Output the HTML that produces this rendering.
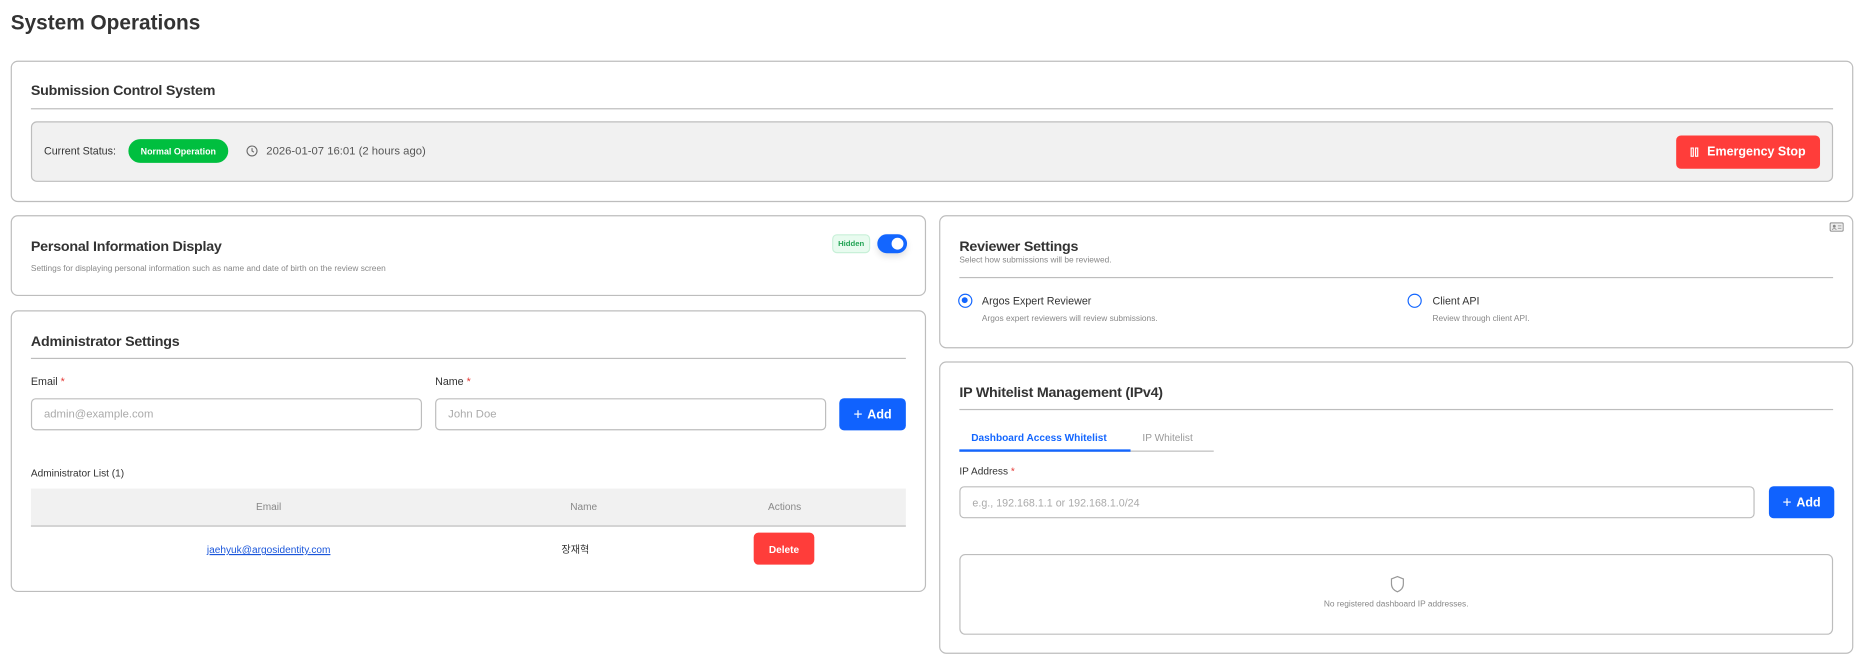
<!DOCTYPE html>
<html><head><meta charset="utf-8"><style>
html,body{margin:0;padding:0;background:#fff;width:1864px;height:667px;overflow:hidden}
#w{position:absolute;left:0;top:0;width:1568px;height:561px;transform:scale(1.18878);transform-origin:0 0;font-family:"Liberation Sans","Noto Sans CJK KR",sans-serif;color:#333}
.a{position:absolute}
.card{position:absolute;border:1px solid #bdbdbd;border-radius:6px;background:#fff;box-sizing:border-box}
.h{position:absolute;font-size:12px;font-weight:bold;color:#333;letter-spacing:-0.2px}
.hr{position:absolute;height:1px;background:#bdbdbd}
.t{position:absolute;white-space:nowrap}
.inp{position:absolute;border:1px solid #bdbdbd;border-radius:4px;box-sizing:border-box;font-size:9.5px;color:#aaa;padding-left:10px;display:flex;align-items:center}
.btn{position:absolute;border-radius:4px;color:#fff;font-weight:bold;display:flex;align-items:center;justify-content:center;white-space:nowrap}
.lbl{font-size:9px;color:#333}
.req{color:#e53935}
.s{font-size:7.5px;color:#888}
</style></head><body><div id="w">
<div class="t" style="left:9px;top:9px;font-size:17.5px;font-weight:bold;color:#333">System Operations</div>

<div class="card" style="left:9px;top:51px;width:1550px;height:119px"></div>
<div class="h" style="left:26px;top:69px">Submission Control System</div>
<div class="hr" style="left:26px;top:91px;width:1516px"></div>
<div class="a" style="left:26px;top:102px;width:1516px;height:51px;background:#f1f1f1;border:1px solid #bdbdbd;border-radius:5px;box-sizing:border-box"></div>
<div class="t" style="left:37px;top:122px;font-size:9px;color:#333">Current Status:</div>
<div class="btn" style="left:108px;top:117px;width:84px;height:20px;border-radius:10px;background:#00bf3f;font-size:7.5px">Normal Operation</div>
<svg class="a" style="left:207px;top:122px" width="10" height="10" viewBox="0 0 10 10"><circle cx="5" cy="5" r="4.2" fill="none" stroke="#666" stroke-width="0.9"/><path d="M5 2.6V5l1.6 1" fill="none" stroke="#666" stroke-width="0.9"/></svg>
<div class="t" style="left:224px;top:122px;font-size:9.5px;color:#555">2026-01-07 16:01 (2 hours ago)</div>
<div class="btn" style="left:1410px;top:114px;width:121px;height:28px;background:#ff3d3a;font-size:10.5px"><svg width="7" height="8" viewBox="0 0 7 8" style="margin-right:7px"><rect x="0.6" y="0.5" width="1.8" height="7" fill="none" stroke="#fff" stroke-width="1"/><rect x="4.3" y="0.5" width="1.8" height="7" fill="none" stroke="#fff" stroke-width="1"/></svg>Emergency Stop</div>

<div class="card" style="left:9px;top:181px;width:770px;height:68px"></div>
<div class="h" style="left:26px;top:200px">Personal Information Display</div>
<div class="t s" style="left:26px;top:223px;font-size:7px">Settings for displaying personal information such as name and date of birth on the review screen</div>
<div class="btn" style="left:700px;top:197px;width:32px;height:16px;background:#e8fbef;border:1px solid #c8f0d8;box-sizing:border-box;color:#23a455;font-size:6.5px">Hidden</div>
<div class="a" style="left:738px;top:197px;width:25px;height:16px;border-radius:8px;background:#1366ff;box-shadow:0 3px 6px rgba(0,0,0,.12)"><div class="a" style="right:3px;top:3px;width:10px;height:10px;border-radius:5px;background:#fff"></div></div>

<div class="card" style="left:9px;top:261px;width:770px;height:237px"></div>
<div class="h" style="left:26px;top:280px">Administrator Settings</div>
<div class="hr" style="left:26px;top:301px;width:736px"></div>
<div class="t lbl" style="left:26px;top:316px">Email <span class="req">*</span></div>
<div class="t lbl" style="left:366px;top:316px">Name <span class="req">*</span></div>
<div class="inp" style="left:26px;top:335px;width:329px;height:27px">admin@example.com</div>
<div class="inp" style="left:366px;top:335px;width:329px;height:27px">John Doe</div>
<div class="btn" style="left:706px;top:335px;width:56px;height:27px;background:#1062fe;font-size:10.5px"><span style="font-weight:normal;font-size:13px;margin-right:4px">+</span>Add</div>
<div class="t lbl" style="left:26px;top:393px;font-size:8.5px">Administrator List (1)</div>
<div class="a" style="left:26px;top:411px;width:736px;height:31px;background:#f1f1f1;border-bottom:1px solid #bdbdbd"></div>
<div class="t" style="left:0;top:421px;width:452px;text-align:center;font-size:8.5px;color:#888">Email</div>
<div class="t" style="left:441px;top:421px;width:100px;text-align:center;font-size:8.5px;color:#888">Name</div>
<div class="t" style="left:610px;top:421px;width:100px;text-align:center;font-size:8.5px;color:#888">Actions</div>
<div class="t" style="left:0;top:457px;width:452px;text-align:center;font-size:8.5px;color:#1a56db;text-decoration:underline">jaehyuk@argosidentity.com</div>
<div class="t" style="left:441px;top:456px;width:86px;text-align:center;font-size:8.5px;color:#333">장재혁</div>
<div class="btn" style="left:634px;top:448px;width:51px;height:27px;background:#ff3d3a;font-size:8.5px">Delete</div>

<div class="card" style="left:790px;top:181px;width:769px;height:112px"></div>
<svg class="a" style="left:1539px;top:187px" width="12" height="8" viewBox="0 0 12 8"><rect x="0.5" y="0.5" width="11" height="7" rx="1" fill="#eee" stroke="#888" stroke-width="0.8"/><circle cx="4" cy="3.3" r="1.2" fill="#888"/><path d="M2.3 6.3c.4-1.3 3-1.3 3.4 0M7 3h3M7 5h3" stroke="#888" stroke-width="0.7" fill="none"/></svg>
<div class="h" style="left:807px;top:200px">Reviewer Settings</div>
<div class="t s" style="left:807px;top:216px;font-size:7px">Select how submissions will be reviewed.</div>
<div class="hr" style="left:807px;top:233px;width:735px"></div>
<div class="a" style="left:806px;top:247px;width:12px;height:12px;border-radius:50%;border:1.3px solid #1366ff;box-sizing:border-box"><div class="a" style="left:2.2px;top:2.2px;width:5px;height:5px;border-radius:50%;background:#1366ff"></div></div>
<div class="t" style="left:826px;top:248px;font-size:9px;color:#333">Argos Expert Reviewer</div>
<div class="t s" style="left:826px;top:265px;font-size:7px">Argos expert reviewers will review submissions.</div>
<div class="a" style="left:1184px;top:247px;width:12px;height:12px;border-radius:50%;border:1.3px solid #1366ff;box-sizing:border-box"></div>
<div class="t" style="left:1205px;top:248px;font-size:9px;color:#333">Client API</div>
<div class="t s" style="left:1205px;top:265px;font-size:7px">Review through client API.</div>

<div class="card" style="left:790px;top:304px;width:769px;height:246px"></div>
<div class="h" style="left:807px;top:323px">IP Whitelist Management (IPv4)</div>
<div class="hr" style="left:807px;top:344px;width:735px"></div>
<div class="t" style="left:817px;top:363px;font-size:8.5px;color:#1366ff;font-weight:bold">Dashboard Access Whitelist</div>
<div class="t" style="left:961px;top:363px;font-size:8.5px;color:#999">IP Whitelist</div>
<div class="a" style="left:807px;top:379px;width:214px;height:1px;background:#bdbdbd"></div>
<div class="a" style="left:807px;top:378px;width:144px;height:2px;background:#1366ff"></div>
<div class="t lbl" style="left:807px;top:391px;font-size:8.5px">IP Address <span class="req">*</span></div>
<div class="inp" style="left:807px;top:409px;width:669px;height:27px;font-size:9px">e.g., 192.168.1.1 or 192.168.1.0/24</div>
<div class="btn" style="left:1488px;top:409px;width:55px;height:27px;background:#1062fe;font-size:10.5px"><span style="font-weight:normal;font-size:13px;margin-right:4px">+</span>Add</div>
<div class="a" style="left:807px;top:466px;width:735px;height:68px;border:1px solid #bdbdbd;border-radius:5px;box-sizing:border-box"></div>
<svg class="a" style="left:1169px;top:484px" width="13" height="15" viewBox="0 0 13 15"><path d="M6.5 1L1.5 3v4.2c0 3.2 2.2 5.5 5 6.6 2.8-1.1 5-3.4 5-6.6V3z" fill="none" stroke="#999" stroke-width="1"/></svg>
<div class="t s" style="left:807px;top:505px;width:735px;text-align:center;font-size:7px">No registered dashboard IP addresses.</div>
</div></body></html>
